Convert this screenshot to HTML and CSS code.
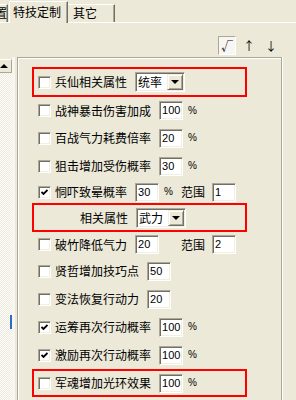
FILE: index.html
```html
<!DOCTYPE html>
<html lang="zh">
<head>
    <meta charset="UTF-8">
    <title>特技定制</title>
    <link rel="stylesheet" href="styles.css">
</head>
<body>
    <div class="tabs">
        <div class="tab cut"><span>置</span></div>
        <div class="tab on">特技定制</div>
        <div class="tab">其它</div>
    </div>

    <div class="tools">
        <span class="tool pressed">√</span>
        <span class="tool">↑</span>
        <span class="tool">↓</span>
    </div>

    <div class="main">
        <div class="scroll">
            <div class="up"><i class="tri"></i></div>
            <div class="track"><div class="mark"></div></div>
        </div>

        <div class="panel">
            <div class="row box h30">
                <span class="cb"></span><span class="lbl">兵仙相关属性</span>
                <span class="sel"><span class="val">统率</span><span class="drop"><i class="arrow"></i></span></span>
            </div>
            <div class="row h27">
                <span class="cb"></span><span class="lbl">战神暴击伤害加成</span>
                <span class="num">100</span><span class="pct">%</span>
            </div>
            <div class="row">
                <span class="cb"></span><span class="lbl">百战气力耗费倍率</span>
                <span class="num">20</span><span class="pct">%</span>
            </div>
            <div class="row">
                <span class="cb"></span><span class="lbl">狙击增加受伤概率</span>
                <span class="num">30</span><span class="pct">%</span>
            </div>
            <div class="row h24">
                <span class="cb on"><svg width="7" height="7" viewBox="0 0 7 7"><path d="M0.5 3 L2.5 5 L6.5 1" fill="none" stroke="#000" stroke-width="1.8"/></svg></span><span class="lbl">恫吓致晕概率</span>
                <span class="num">30</span><span class="pct">%</span>
                <span class="rng">范围</span><span class="num">1</span>
            </div>
            <div class="row box sub h29">
                <span class="lbl">相关属性</span>
                <span class="sel"><span class="val">武力</span><span class="drop"><i class="arrow"></i></span></span>
            </div>
            <div class="row h25">
                <span class="cb"></span><span class="lbl">破竹降低气力</span>
                <span class="num">20</span><span class="pct"></span>
                <span class="rng">范围</span><span class="num">2</span>
            </div>
            <div class="row">
                <span class="cb"></span><span class="lbl">贤哲增加技巧点</span>
                <span class="num">50</span>
            </div>
            <div class="row">
                <span class="cb"></span><span class="lbl">变法恢复行动力</span>
                <span class="num">20</span>
            </div>
            <div class="row">
                <span class="cb on"><svg width="7" height="7" viewBox="0 0 7 7"><path d="M0.5 3 L2.5 5 L6.5 1" fill="none" stroke="#000" stroke-width="1.8"/></svg></span><span class="lbl">运筹再次行动概率</span>
                <span class="num">100</span><span class="pct">%</span>
            </div>
            <div class="row">
                <span class="cb on"><svg width="7" height="7" viewBox="0 0 7 7"><path d="M0.5 3 L2.5 5 L6.5 1" fill="none" stroke="#000" stroke-width="1.8"/></svg></span><span class="lbl">激励再次行动概率</span>
                <span class="num">100</span><span class="pct">%</span>
            </div>
            <div class="row box">
                <span class="cb"></span><span class="lbl">军魂增加光环效果</span>
                <span class="num">100</span><span class="pct">%</span>
            </div>
        </div>
    </div>
</body>
</html>
```

FILE: styles.css
```css
* {
    box-sizing: border-box;
}

body {
    margin: 0;
    width: 296px;
    height: 400px;
    overflow: hidden;
    background: #ece9d8;
    color: #000;
    font-family: "Noto Sans CJK SC", sans-serif;
    font-size: 12px;
    line-height: 14px;
}

/* tab strip */
.tabs {
    display: flex;
    align-items: flex-end;
    height: 23px;
    box-shadow: inset 0 -1px #fff;
}

.tab {
    height: 18px;
    margin-bottom: 1px;
    padding: 1px 0 0 5px;
    border-top: 1px solid #fff;
    border-right: 1px solid #716f64;
    box-shadow: inset -1px 0 #aca899;
    width: 47px;
}

.tab.cut {
    width: 8px;
    padding: 1px 0 0 0;
    display: flex;
    justify-content: flex-end;
    overflow: hidden;
    margin-right: 1px;
}

.tab.on {
    width: 59px;
    height: 22px;
    margin-bottom: 0;
    padding: 3px 0 0 3px;
    border-left: 1px solid #fff;
    background: #ece9d8;
}

/* little toolbar */
.tools {
    display: flex;
    justify-content: flex-end;
    gap: 4px;
    height: 34px;
    padding: 13px 16px 0 0;
}

.tool {
    width: 18px;
    height: 19px;
    display: flex;
    align-items: center;
    justify-content: center;
    font-size: 12px;
}

.tool.pressed {
    background: #f7f6f2;
    border: 1px solid;
    border-color: #aca899 #fff #fff #aca899;
}

.main {
    display: flex;
    height: 343px;
}

/* cut off scroll bar on the left */
.scroll {
    width: 15px;
    margin-right: 2px;
    border-right: 3px solid #f7f6f1;
    display: flex;
    flex-direction: column;
}

.up {
    height: 14px;
    margin-top: 2px;
    display: flex;
    align-items: center;
    border-top: 1px solid #fff;
    border-right: 1px solid #aca899;
    border-bottom: 1px solid #aca899;
}

.tri {
    width: 0;
    height: 0;
    border-left: 4px solid transparent;
    border-right: 4px solid transparent;
    border-bottom: 4px solid #000;
}

.track {
    flex: 1;
    display: flex;
    justify-content: flex-end;
    padding-top: 242px;
    background: repeating-conic-gradient(#fff 0 25%, #ece9d8 0 50%) 0 0 / 2px 2px;
}

.mark {
    width: 2px;
    height: 14px;
    background: #316ac5;
}

/* settings panel */
.panel {
    width: 265px;
    border: 1px solid #aca899;
    border-bottom: none;
    box-shadow: inset 1px 1px #fff, 1px 0 #fff;
    padding: 9px 0 0 14px;
}

.row {
    display: flex;
    align-items: center;
    height: 28px;
    padding-left: 6px;
}

.h30 { height: 30px; }
.h29 { height: 29px; margin-top: -1px; }
.h27 { height: 27px; }
.h25 { height: 25px; }
.h24 { height: 24px; }

.box {
    width: 215px;
    border: 2px solid #ff0000;
    padding-left: 4px;
}

.box.sub {
    padding-left: 46px;
}

.cb {
    width: 13px;
    height: 13px;
    margin-right: 4px;
    display: flex;
    align-items: center;
    justify-content: center;
    background: #fff;
    border: 1px solid;
    border-color: #aca899 #fff #fff #aca899;
    box-shadow: inset 1px 1px #716f64, inset -1px -1px #f1efe2;
}

.lbl {
    margin-right: 8px;
    white-space: nowrap;
}

.num,
.sel {
    background: #fff;
    border: 1px solid;
    border-color: #aca899 #fff #fff #aca899;
    box-shadow: inset 1px 1px #716f64, inset -1px -1px #f1efe2;
}

.num {
    width: 24px;
    height: 19px;
    padding-left: 2px;
    font-family: "Liberation Sans", sans-serif;
    font-size: 11px;
    line-height: 17px;
}

.pct {
    width: 22px;
    padding-left: 5px;
    font-family: "Liberation Sans", sans-serif;
    font-size: 10px;
}

.rng {
    margin-right: 7px;
}

.sel {
    display: flex;
    align-items: center;
    width: 50px;
    height: 20px;
    padding: 1px 1px 1px 1px;
}

.val {
    flex: 1;
    padding-left: 1px;
}

.drop {
    width: 16px;
    height: 16px;
    display: flex;
    align-items: center;
    justify-content: center;
    background: #ece9d8;
    border: 1px solid;
    border-color: #f1efe2 #716f64 #716f64 #f1efe2;
    box-shadow: inset 1px 1px #fff, inset -1px -1px #aca899;
}

.arrow {
    width: 0;
    height: 0;
    border-left: 4px solid transparent;
    border-right: 4px solid transparent;
    border-top: 4px solid #000;
}
```
